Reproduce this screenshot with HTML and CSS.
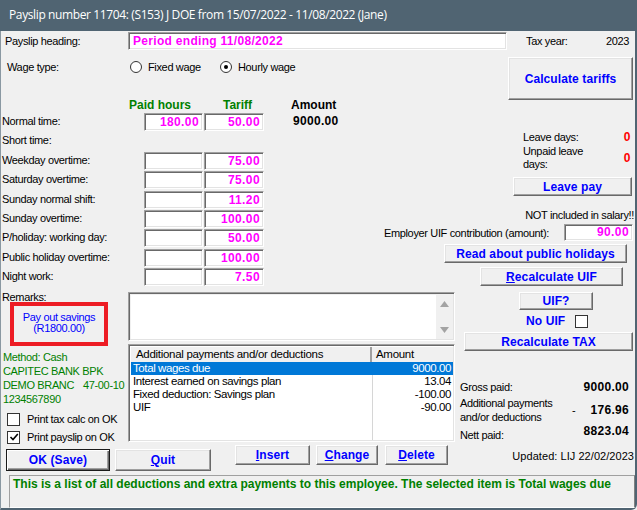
FILE: index.html
```html
<!DOCTYPE html>
<html lang="en">
<head>
    <meta charset="UTF-8">
    <title>Payslip</title>
    <link rel="stylesheet" href="styles.css">
</head>
<body>
    <div class="window">
        <div class="titlebar">Payslip number 11704: (S153) J DOE from 15/07/2022 - 11/08/2022 (Jane)</div>

        <div class="client">
            <div class="heading-row">
                <span class="heading-label">Payslip heading:</span>
                <div class="edit heading-edit">Period ending 11/08/2022</div>
                <span class="tax-label">Tax year:</span>
                <span class="tax-val">2023</span>
            </div>

            <div class="middle">
                <div class="rates">
                    <div class="wage-row">
                        <span class="wage-label">Wage type:</span>
                        <label class="radio-opt"><span class="radio"></span>Fixed wage</label>
                        <label class="radio-opt"><span class="radio checked"></span>Hourly wage</label>
                    </div>

                    <div class="col-heads">
                        <span class="head-paid">Paid hours</span>
                        <span class="head-tariff">Tariff</span>
                        <span class="head-amount">Amount</span>
                    </div>

                    <div class="rate-grid">
                        <span class="rate-label">Normal time:</span>
                        <div class="edit num">180.00</div>
                        <div class="edit num">50.00</div>
                        <span class="amount">9000.00</span>

                        <span class="rate-label">Short time:</span>
                        <span></span><span></span><span></span>

                        <span class="rate-label">Weekday overtime:</span>
                        <div class="edit num"></div>
                        <div class="edit num">75.00</div>
                        <span></span>

                        <span class="rate-label">Saturday overtime:</span>
                        <div class="edit num"></div>
                        <div class="edit num">75.00</div>
                        <span></span>

                        <span class="rate-label">Sunday normal shift:</span>
                        <div class="edit num"></div>
                        <div class="edit num">11.20</div>
                        <span></span>

                        <span class="rate-label">Sunday overtime:</span>
                        <div class="edit num"></div>
                        <div class="edit num">100.00</div>
                        <span></span>

                        <span class="rate-label">P/holiday: working day:</span>
                        <div class="edit num"></div>
                        <div class="edit num">50.00</div>
                        <span></span>

                        <span class="rate-label">Public holiday overtime:</span>
                        <div class="edit num"></div>
                        <div class="edit num">100.00</div>
                        <span></span>

                        <span class="rate-label">Night work:</span>
                        <div class="edit num"></div>
                        <div class="edit num">7.50</div>
                        <span></span>
                    </div>
                </div>

                <div class="side">
                    <div class="btn btn-tariffs">Calculate tariffs</div>

                    <div class="leave-block">
                        <span class="leave-label">Leave days:</span>
                        <span class="leave-val">0</span>
                        <span class="leave-label two-line">Unpaid leave days:</span>
                        <span class="leave-val">0</span>
                    </div>

                    <div class="btn btn-leave">Leave pay</div>
                    <div class="not-included">NOT included in salary!!</div>

                    <div class="uif-row">
                        <span>Employer UIF contribution (amount):</span>
                        <div class="edit num uif-edit">90.00</div>
                    </div>

                    <div class="btn btn-holidays">Read about public holidays</div>
                    <div class="btn btn-recalc-uif"><u>R</u>ecalculate UIF</div>
                </div>
            </div>

            <div class="lower">
                <div class="lower-left">
                    <div class="remarks-label">Remarks:</div>
                    <div class="savings-box">
                        <span>Pay out savings</span>
                        <span>(R1800.00)</span>
                    </div>
                    <div class="bank-info">
                        <div>Method: Cash</div>
                        <div>CAPITEC BANK BPK</div>
                        <div class="branch-line"><span class="branch">DEMO BRANC</span><span>47-00-10</span></div>
                        <div>1234567890</div>
                    </div>
                    <label class="check-row"><span class="checkbox"></span>Print tax calc on OK</label>
                    <label class="check-row"><span class="checkbox checked">
                        <svg width="10" height="10" viewBox="0 0 10 10"><path d="M1.5 5 L4 7.5 L8.8 2" fill="none" stroke="#000" stroke-width="1.6"/></svg>
                    </span>Print payslip on OK</label>
                </div>

                <div class="lower-mid">
                    <div class="memo">
                        <div class="memo-text"></div>
                        <div class="vscroll">
                            <svg width="9" height="6" viewBox="0 0 9 6"><path d="M0 6 L4.5 0 L9 6 Z" fill="#a3a3a3"/></svg>
                            <svg width="9" height="6" viewBox="0 0 9 6"><path d="M0 0 L4.5 6 L9 0 Z" fill="#a3a3a3"/></svg>
                        </div>
                    </div>

                    <div class="listview">
                        <div class="lv-head">
                            <span class="lv-col1">Additional payments and/or deductions</span>
                            <span class="lv-col2">Amount</span>
                        </div>
                        <div class="lv-body">
                            <div class="lv-row selected"><span class="lv-col1">Total wages due</span><span class="lv-col2">9000.00</span></div>
                            <div class="lv-row"><span class="lv-col1">Interest earned on savings plan</span><span class="lv-col2">13.04</span></div>
                            <div class="lv-row"><span class="lv-col1">Fixed deduction: Savings plan</span><span class="lv-col2">-100.00</span></div>
                            <div class="lv-row"><span class="lv-col1">UIF</span><span class="lv-col2">-90.00</span></div>
                        </div>
                    </div>
                </div>

                <div class="lower-right">
                    <div class="btn btn-uifq">UIF?</div>
                    <div class="no-uif">No UIF <span class="checkbox"></span></div>
                    <div class="btn btn-recalc-tax">Recalculate TAX</div>

                    <div class="totals">
                        <div class="total-row">
                            <span class="total-label">Gross paid:</span>
                            <span class="total-dash"></span>
                            <span class="total-val">9000.00</span>
                        </div>
                        <div class="total-row extra">
                            <span class="total-label">Additional payments and/or deductions</span>
                            <span class="total-dash">-</span>
                            <span class="total-val">176.96</span>
                        </div>
                        <div class="total-row nett">
                            <span class="total-label">Nett paid:</span>
                            <span class="total-dash"></span>
                            <span class="total-val">8823.04</span>
                        </div>
                    </div>
                </div>
            </div>

            <div class="button-row">
                <div class="btn btn-default btn-ok">OK (Save)</div>
                <div class="btn btn-quit"><u>Q</u>uit</div>
                <div class="btn btn-insert"><u>I</u>nsert</div>
                <div class="btn btn-change"><u>C</u>hange</div>
                <div class="btn btn-delete"><u>D</u>elete</div>
                <span class="updated">Updated: LIJ 22/02/2023</span>
            </div>

            <div class="status">This is a list of all deductions and extra payments to this employee. The selected item is Total wages due</div>
        </div>
    </div>
</body>
</html>
```

FILE: styles.css
```css
* {
    box-sizing: border-box;
}

body {
    margin: 0;
    background-color: #f0f0f0;
    font-family: "Liberation Sans", Arial, sans-serif;
    font-size: 11px;
    letter-spacing: -0.35px;
    color: #000;
}

.window {
    width: 637px;
    height: 510px;
    display: flex;
    flex-direction: column;
    overflow: hidden;
    background-color: #f0f0f0;
}

.titlebar {
    flex: none;
    height: 31px;
    line-height: 30px;
    padding-left: 9px;
    background-color: #506472;
    color: #fff;
    font-family: "Open Sans", "Noto Sans", sans-serif;
    font-size: 12px;
    letter-spacing: -0.38px;
    white-space: nowrap;
}

.client {
    flex: 1;
    display: flex;
    flex-direction: column;
    border-left: 1px solid #8a98a2;
    border-right: 2px solid #506472;
    border-bottom: 2px solid #506472;
    border-bottom-right-radius: 6px;
}

/* sunken edit box */
.edit {
    background-color: #fff;
    border: 1px solid;
    border-color: #a0a0a0 #fff #fff #a0a0a0;
    box-shadow: inset 1px 1px 0 #696969, inset -1px -1px 0 #e3e3e3;
    color: #ff00ff;
    font-weight: bold;
    font-size: 12px;
    letter-spacing: 0.4px;
    white-space: nowrap;
    overflow: hidden;
}

.edit.num {
    height: 18px;
    line-height: 16px;
    text-align: right;
    padding-right: 3px;
}

/* raised button */
.btn {
    display: flex;
    align-items: center;
    justify-content: center;
    background-color: #f0f0f0;
    border: 1px solid;
    border-color: #fff #696969 #696969 #fff;
    box-shadow: inset -1px -1px 0 #a0a0a0, inset 1px 1px 0 #e3e3e3;
    color: #0000ff;
    font-weight: bold;
    font-size: 12px;
    letter-spacing: 0.1px;
    white-space: nowrap;
}

.btn u {
    text-underline-offset: 1px;
}

.btn-default {
    border-color: #1a1a1a;
    box-shadow: inset 1px 1px 0 #fff, inset -1px -1px 0 #696969, inset -2px -2px 0 #a0a0a0;
}

/* heading */
.heading-row {
    display: flex;
    align-items: center;
    height: 18px;
    margin-top: 1px;
}

.heading-label {
    width: 127px;
    padding-left: 4px;
}

.heading-edit {
    width: 379px;
    height: 18px;
    line-height: 16px;
    padding-left: 4px;
    letter-spacing: 0.3px;
}

.tax-label {
    margin-left: 19px;
}

.tax-val {
    margin-left: auto;
    padding-right: 6px;
}

/* middle block */
.middle {
    display: flex;
    height: 241px;
}

.rates {
    width: 380px;
}

.wage-row {
    display: flex;
    align-items: center;
    height: 18px;
    margin-top: 8px;
}

.wage-label {
    width: 129px;
    padding-left: 6px;
}

.radio-opt {
    display: flex;
    align-items: center;
    gap: 6px;
    width: 90px;
}

.radio {
    width: 12px;
    height: 12px;
    border: 1px solid #333;
    border-radius: 50%;
    background-color: #fff;
    display: flex;
    align-items: center;
    justify-content: center;
}

.radio.checked::after {
    content: "";
    width: 4px;
    height: 4px;
    border-radius: 50%;
    background-color: #000;
}

.col-heads {
    display: flex;
    height: 14px;
    line-height: 14px;
    margin-top: 22px;
    padding-left: 128px;
    font-weight: bold;
    font-size: 12px;
    letter-spacing: 0;
}

.head-paid {
    width: 94px;
    color: #008000;
}

.head-tariff {
    width: 68px;
    color: #008000;
}

.rate-grid {
    display: grid;
    grid-template-columns: 142px 59px 60px 1fr;
    grid-auto-rows: 19.4px;
    column-gap: 1px;
    margin-top: 1px;
}

.rate-label {
    padding-left: 1px;
    line-height: 17px;
    white-space: nowrap;
}

.amount {
    padding-left: 28px;
    line-height: 17px;
    font-weight: bold;
    font-size: 12px;
    letter-spacing: 0.3px;
}

.side {
    width: 254px;
    display: flex;
    flex-direction: column;
    align-items: flex-end;
}

.btn-tariffs {
    width: 125px;
    height: 43px;
    margin-top: 7px;
    margin-right: 2px;
}

.leave-block {
    display: grid;
    grid-template-columns: 75px 1fr;
    row-gap: 1px;
    width: 107px;
    margin-top: 30px;
    margin-right: 5px;
    line-height: 14px;
}

.leave-label.two-line {
    line-height: 12.5px;
}

.leave-val {
    align-self: center;
    text-align: right;
    color: #ff0000;
    font-weight: bold;
    font-size: 12px;
}

.btn-leave {
    width: 119px;
    height: 19px;
    margin-top: 7px;
    margin-right: 3px;
}

.not-included {
    margin-top: 12px;
    margin-right: 1px;
    line-height: 14px;
}

.uif-row {
    display: flex;
    align-items: center;
    gap: 15px;
    margin-top: 2px;
    margin-right: 2px;
}

.uif-edit.num {
    width: 69px;
    height: 17px;
    line-height: 15px;
}

.btn-holidays {
    width: 183px;
    height: 19px;
    margin-top: 3px;
    margin-right: 8px;
}

.btn-recalc-uif {
    width: 143px;
    height: 19px;
    margin-top: 4px;
    margin-right: 12px;
}

/* lower block */
.lower {
    display: flex;
    height: 154px;
}

.lower-left {
    width: 127px;
}

.remarks-label {
    line-height: 12px;
    padding-left: 1px;
}

.savings-box {
    width: 98px;
    height: 44px;
    margin-top: -1px;
    margin-left: 9px;
    border: 4px solid #ed1c24;
    display: flex;
    flex-direction: column;
    align-items: center;
    justify-content: center;
    line-height: 11.5px;
    color: #0000ff;
    padding-bottom: 2px;
}

.bank-info {
    margin-top: 4px;
    padding-left: 2px;
    line-height: 14px;
    color: #008000;
    white-space: nowrap;
}

.branch-line {
    display: flex;
}

.branch {
    width: 80px;
}

.check-row {
    display: flex;
    align-items: center;
    gap: 7px;
    height: 18px;
    padding-left: 6px;
}

.check-row:first-of-type {
    margin-top: 4px;
}

.checkbox {
    width: 13px;
    height: 13px;
    border: 1px solid #333;
    background-color: #fff;
    display: inline-flex;
    align-items: center;
    justify-content: center;
}

.lower-mid {
    width: 327px;
}

.memo {
    display: flex;
    height: 49px;
    margin-top: 1px;
    border: 1px solid;
    border-color: #a0a0a0 #fff #fff #a0a0a0;
    box-shadow: inset 1px 1px 0 #696969, inset -1px -1px 0 #e3e3e3;
    padding: 2px 1px 1px 2px;
}

.memo-text {
    flex: 1;
    background-color: #fff;
}

.vscroll {
    width: 17px;
    background-color: #f0f0f0;
    display: flex;
    flex-direction: column;
    justify-content: space-between;
    align-items: center;
    padding: 6px 0 6px;
}

.listview {
    height: 98px;
    margin-top: 3px;
    display: flex;
    flex-direction: column;
    border: 1px solid;
    border-color: #a0a0a0 #fff #fff #a0a0a0;
    box-shadow: inset 1px 1px 0 #696969, inset -1px -1px 0 #e3e3e3;
    padding: 2px 1px 1px 2px;
    background-color: #fff;
}

.lv-head {
    display: flex;
    height: 15px;
    line-height: 14px;
    background-color: #f0f0f0;
    font-size: 11.5px;
    letter-spacing: -0.3px;
}

.lv-head .lv-col1 {
    border-right: 2px solid #a0a0a0;
    padding-left: 5px;
}

.lv-head .lv-col2 {
    padding-left: 4px;
}

.lv-col1 {
    width: 241px;
    padding-left: 2px;
}

.lv-col2 {
    flex: 1;
}

.lv-body {
    flex: 1;
    background: linear-gradient(#d6d6d6, #d6d6d6) 241px 0 / 1px 100% no-repeat;
    background-color: #fff;
}

.lv-row {
    display: flex;
    height: 13px;
    line-height: 13px;
    font-size: 11.5px;
    letter-spacing: -0.4px;
}

.lv-row .lv-col2 {
    text-align: right;
    padding-right: 2px;
}

.lv-row.selected {
    background-color: #0078d7;
    color: #fff;
}

.lower-right {
    flex: 1;
}

.btn-uifq {
    width: 74px;
    height: 18px;
    margin-top: 1px;
    margin-left: 64px;
}

.no-uif {
    display: flex;
    align-items: center;
    gap: 10px;
    height: 14px;
    margin-top: 4px;
    margin-left: 71px;
    color: #0000ff;
    font-weight: bold;
    font-size: 12px;
    letter-spacing: 0.1px;
}

.btn-recalc-tax {
    width: 169px;
    height: 19px;
    margin-top: 4px;
    margin-left: 9px;
}

.totals {
    margin-top: 29px;
    padding-left: 5px;
    padding-right: 6px;
}

.total-row {
    display: flex;
    align-items: center;
    line-height: 14px;
}

.total-row.extra {
    margin-top: 2px;
}

.total-row.nett {
    margin-top: 4px;
    align-items: flex-start;
}

.total-label {
    flex: 1;
}

.extra .total-label {
    width: 100px;
    flex: none;
    margin-right: auto;
}

.total-dash {
    width: 7px;
}

.total-val {
    width: 50px;
    text-align: right;
    font-weight: bold;
    font-size: 12px;
    letter-spacing: 0.3px;
}

.nett .total-val {
    margin-top: -4px;
}

/* bottom buttons */
.button-row {
    display: flex;
    align-items: flex-start;
    height: 26px;
}

.btn-ok {
    width: 104px;
    height: 22px;
    margin-top: 4px;
    margin-left: 5px;
}

.btn-quit {
    width: 96px;
    height: 22px;
    margin-top: 4px;
    margin-left: 5px;
}

.btn-insert {
    width: 75px;
    height: 20px;
    margin-left: 24px;
}

.btn-change {
    width: 62px;
    height: 20px;
    margin-left: 6px;
}

.btn-delete {
    width: 63px;
    height: 20px;
    margin-left: 7px;
}

.updated {
    margin-left: auto;
    margin-top: 4px;
    line-height: 14px;
    padding-right: 1px;
    letter-spacing: 0.05px;
}

.status {
    flex: 1;
    margin-top: 4px;
    margin-left: 8px;
    border: 1px solid;
    border-color: #a0a0a0 #808080 #fff #a0a0a0;
    padding: 1px 3px;
    color: #008000;
    font-weight: bold;
    font-size: 12px;
    letter-spacing: 0;
    white-space: nowrap;
}
```
